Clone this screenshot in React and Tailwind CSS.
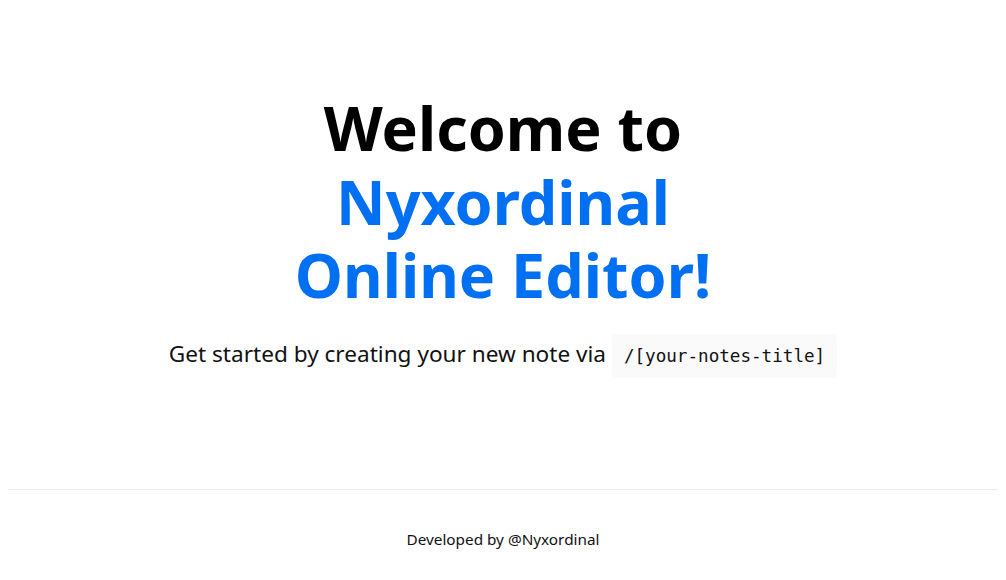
import React from 'react';

const App = () => {
  return (
    <div
      className="min-h-[589px] px-2 flex flex-col justify-center items-center bg-white text-black"
      style={{ fontFamily: '"Noto Sans", "Open Sans", sans-serif' }}
    >
      <main className="py-20 flex-1 flex flex-col justify-center items-center">
        {/* Title */}
        <h1 className="m-0 text-[61px] leading-[73.6px] font-bold text-center">
          Welcome to <br />
          <a href="#" className="text-[#0070f3] no-underline">
            Nyxordinal <br /> Online Editor!
          </a>
        </h1>

        {/* Description */}
        <p className="my-6 text-[22.6px] leading-[36px] text-center text-[#111]">
          Get started by creating your new note via{' '}
          <code
            className="bg-[#fafafa] rounded-[5px] p-3 text-[17.6px]"
            style={{ fontFamily: '"DejaVu Sans Mono", Menlo, monospace' }}
          >
            /[your-notes-title]
          </code>
        </p>
      </main>

      {/* Footer */}
      <footer className="w-full h-[100px] border-t border-[#eaeaea] flex justify-center items-center">
        <a href="#" className="text-[15.3px] text-[#111]">
          Developed by @Nyxordinal
        </a>
      </footer>
    </div>
  );
};

export default App;
